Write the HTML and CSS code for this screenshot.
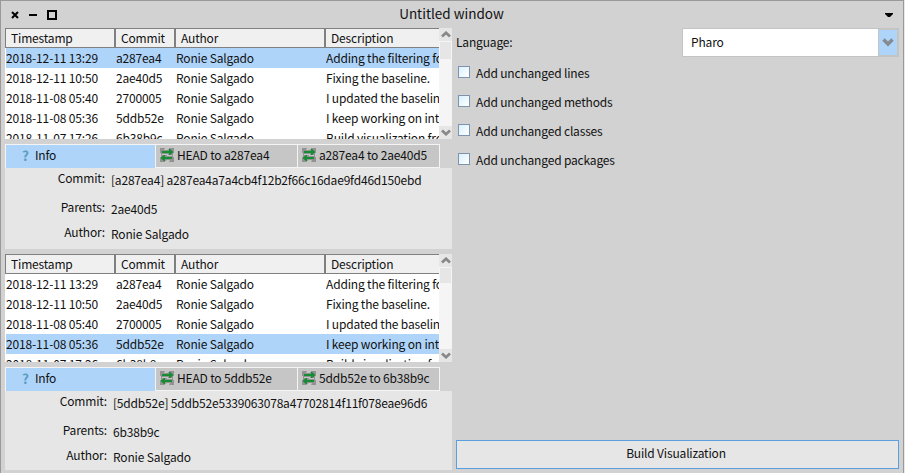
FILE: index.html
```html
<!DOCTYPE html>
<html lang="en">
<head>
<meta charset="utf-8">
<title>Untitled window</title>
<link rel="stylesheet" href="styles.css">
</head>
<body>
<svg class="defs" width="0" height="0">
  <symbol id="sync" viewBox="0 0 14 14">
    <path fill="#929292" d="M0 0h14v14H0z"/>
    <path fill="#c6c6c6" d="M5 0h4v1L7 2H4zM0 5h1v4H0zM2 6h6v1H2zM7 7h5v1H7zM13 5h1v4h-1zM5 14v-1l2-1h3l-1 2z"/>
    <path fill="#168c35" d="M2 3h7V1h1l3 2.500v1L10 7H9V5H2zM12 9H5V7H4L1 9.500v1L4 13h1v-2h7z"/>
  </symbol>
  <symbol id="chev" viewBox="0 0 10 7">
    <path d="M1 1.500 5 5.200 9 1.500" fill="none" stroke="#888" stroke-width="2.700"/>
  </symbol>
</svg>
<div class="window">
  <header class="titlebar">
    <div class="controls">
      <svg width="8" height="8" viewBox="0 0 8 8"><path d="M1 1 7 7M7 1 1 7" stroke="#000" stroke-width="2"/></svg>
      <svg width="8" height="8" viewBox="0 0 8 8"><path d="M0 3h8v2H0z"/></svg>
      <svg width="10" height="10" viewBox="0 0 10 10"><path d="M1 1h8v8H1z" fill="none" stroke="#000" stroke-width="2"/></svg>
    </div>
    <h1>Untitled window</h1>
    <svg class="menu" width="8" height="4" viewBox="0 0 8 4"><path d="M0 0h8v1L5 4H3L0 1z"/></svg>
  </header>
  <main class="content">
    <div class="left">
      <section class="list first">
        <div class="table">
          <div class="row head"><span>Timestamp</span><span>Commit</span><span>Author</span><span>Description</span></div>
          <div class="row selected"><span>2018-12-11 13:29</span><span>a287ea4</span><span>Ronie Salgado</span><span>Adding the filtering for</span></div>
          <div class="row"><span>2018-12-11 10:50</span><span>2ae40d5</span><span>Ronie Salgado</span><span>Fixing the baseline.</span></div>
          <div class="row"><span>2018-11-08 05:40</span><span>2700005</span><span>Ronie Salgado</span><span>I updated the baseline</span></div>
          <div class="row"><span>2018-11-08 05:36</span><span>5ddb52e</span><span>Ronie Salgado</span><span>I keep working on inte</span></div>
          <div class="row"><span>2018-11-07 17:26</span><span>6b38b9c</span><span>Ronie Salgado</span><span>Build visualization from</span></div>
        </div>
        <div class="scroll"><div class="arrow up"><svg><use href="#chev"/></svg></div><div class="thumb"></div><div class="arrow down"><svg><use href="#chev"/></svg></div></div>
      </section>
      <nav class="tabs">
        <div class="tab active"><b>?</b><span>Info</span></div>
        <div class="tab"><svg><use href="#sync"/></svg><span>HEAD to a287ea4</span></div>
        <div class="tab"><svg><use href="#sync"/></svg><span>a287ea4 to 2ae40d5</span></div>
      </nav>
      <section class="info upper">
        <label>Commit:</label><p class="hash">[a287ea4] a287ea4a7a4cb4f12b2f66c16dae9fd46d150ebd</p>
        <label>Parents:</label><p>2ae40d5</p>
        <label>Author:</label><p>Ronie Salgado</p>
      </section>
      <section class="list second">
        <div class="table">
          <div class="row head"><span>Timestamp</span><span>Commit</span><span>Author</span><span>Description</span></div>
          <div class="row"><span>2018-12-11 13:29</span><span>a287ea4</span><span>Ronie Salgado</span><span>Adding the filtering for</span></div>
          <div class="row"><span>2018-12-11 10:50</span><span>2ae40d5</span><span>Ronie Salgado</span><span>Fixing the baseline.</span></div>
          <div class="row"><span>2018-11-08 05:40</span><span>2700005</span><span>Ronie Salgado</span><span>I updated the baseline</span></div>
          <div class="row selected"><span>2018-11-08 05:36</span><span>5ddb52e</span><span>Ronie Salgado</span><span>I keep working on inte</span></div>
          <div class="row"><span>2018-11-07 17:26</span><span>6b38b9c</span><span>Ronie Salgado</span><span>Build visualization from</span></div>
        </div>
        <div class="scroll"><div class="arrow up"><svg><use href="#chev"/></svg></div><div class="thumb"></div><div class="arrow down"><svg><use href="#chev"/></svg></div></div>
      </section>
      <nav class="tabs">
        <div class="tab active"><b>?</b><span>Info</span></div>
        <div class="tab"><svg><use href="#sync"/></svg><span>HEAD to 5ddb52e</span></div>
        <div class="tab"><svg><use href="#sync"/></svg><span>5ddb52e to 6b38b9c</span></div>
      </nav>
      <section class="info lower">
        <label>Commit:</label><p class="hash">[5ddb52e] 5ddb52e5339063078a47702814f11f078eae96d6</p>
        <label>Parents:</label><p>6b38b9c</p>
        <label>Author:</label><p>Ronie Salgado</p>
      </section>
    </div>
    <div class="right">
      <div class="language">
        <span>Language:</span>
        <div class="select"><span>Pharo</span><div class="drop"><svg viewBox="0 0 12 9"><path d="M1.500 1.500 6 6l4.500-4.500" fill="none" stroke="#858b91" stroke-width="3.400"/></svg></div></div>
      </div>
      <div class="check"><i></i><span>Add unchanged lines</span></div>
      <div class="check"><i></i><span>Add unchanged methods</span></div>
      <div class="check"><i></i><span>Add unchanged classes</span></div>
      <div class="check"><i></i><span>Add unchanged packages</span></div>
      <button>Build Visualization</button>
    </div>
  </main>
</div>
</body>
</html>
```
FILE: styles.css
```css
* { box-sizing: border-box; margin: 0; }
body {
  width: 905px;
  height: 473px;
  overflow: hidden;
  background: #e8e8e8;
  font: 12px/20px "Noto Sans CJK SC", "Open Sans", sans-serif;
  letter-spacing: -0.17px;
  color: #111;
  white-space: nowrap;
}
svg { display: block; flex: none; }
.defs { position: absolute; }
.window {
  width: 904px;
  height: 473px;
  background: #d2d2d2;
  border: 1px solid #999;
  border-bottom: 0;
}
.titlebar {
  display: grid;
  grid-template-columns: 1fr auto 1fr;
  align-items: center;
  height: 27px;
  padding: 0 10px 0 9px;
}
.titlebar h1 { font-size: 13.5px; font-weight: 400; line-height: 22px; letter-spacing: 0; height: 26px; }
.controls { display: flex; align-items: center; gap: 10px; padding-left: 1px; }
.menu { justify-self: end; }
.content { display: flex; padding-left: 4px; }
.left { width: 447px; }
.list { display: flex; overflow: hidden; margin-bottom: 5px; }
.first { height: 111px; }
.second { height: 108px; }
.table { width: 434px; background: #fff; }
.row {
  display: grid;
  grid-template-columns: 110px 60px 150px 113px;
  height: 20px;
  margin-left: 1px;
}
.row span { overflow: hidden; }
.row:not(.head) span:first-child { letter-spacing: -0.14px; }
.head {
  margin: 0;
  background: #f0f0f0;
  border: solid #808080;
  border-width: 1px 0 1px 1px;
  line-height: 18px;
}
.head span { height: 18px; padding-left: 5px; border-right: 2px solid #808080; }
.head span:last-child { border: 0; }
.selected { background: #aed4fa; }
.scroll { display: flex; flex-direction: column; width: 13px; background: #f5f5f5; }
.arrow { display: flex; align-items: center; justify-content: center; height: 13px; background: #e6e6e6; }
.arrow svg { width: 10px; height: 7px; }
.up svg { transform: rotate(180deg); }
.down { margin-top: auto; }
.thumb { height: 17px; margin: 1px; background: #e6e6e6; }
.second .thumb { height: 15px; }
.tabs { display: flex; height: 24px; width: 435px; border: solid #f4f4f4; border-width: 1px 1px 0; }
.tab {
  display: flex;
  align-items: flex-start;
  width: 142px;
  padding-left: 4px;
  background: #c6c6c6;
  border-bottom: 1px solid #f4f4f4;
}
.tab + .tab { border-left: 1px solid #f4f4f4; }
.tab svg { width: 14px; height: 14px; margin: 3px 3px 0 0; }
.active { width: 149px; padding-left: 16px; background: #aed4fa; border-bottom: 0; }
.active b { width: 13px; color: #5b9cc0; font-size: 13.5px; }
.info {
  display: grid;
  grid-template-columns: 100px 1fr;
  grid-template-rows: 29px 25px 25px;
  column-gap: 6px;
  height: 81px;
  margin-bottom: 5px;
  background: #e6e6e6;
}
.info label { text-align: right; }
.info p { padding-top: 2px; }
.info .hash { letter-spacing: -0.19px; }
.lower { height: 79px; grid-template-columns: 102px 1fr; }
.right { display: flex; flex-direction: column; width: 443px; height: 441px; margin-left: 4px; }
.language { display: flex; justify-content: space-between; line-height: 28px; }
.select { display: flex; width: 217px; height: 29px; background: #fff; border: 1px solid #c4c4c4; line-height: 26px; }
.select span { flex: 1; padding-left: 8px; }
.drop { display: flex; align-items: center; justify-content: center; width: 20px; background: #aed4fa; border: 1px solid #c4c4c4; }
.drop svg { width: 12px; height: 9px; }
.check { display: flex; height: 29px; padding: 6px 0 0 2px; }
.check i { width: 12px; height: 12px; margin: 3px 6px 0 0; background: linear-gradient(135deg, #d8f1fd, #fff); border: 1px solid #8093ae; }
button { height: 29px; margin-top: auto; background: #e6e6e6; border: 1px solid #5a9fe0; font: inherit; letter-spacing: inherit; color: inherit; padding: 0 3px 3px 0; }
```
